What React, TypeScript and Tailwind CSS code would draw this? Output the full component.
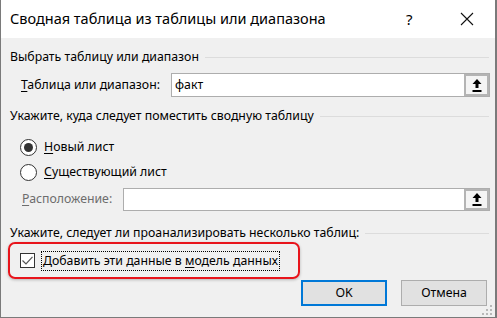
import React from "react";

const font = { fontFamily: '"Noto Sans", "Open Sans", sans-serif' };

const SectionHeader = ({ text }: { text: string }) => (
  <div className="flex items-center h-[16px]">
    <span className="whitespace-nowrap">{text}</span>
    <div className="flex-1 h-px bg-[#dcdcdc] ml-[6px] mr-[6px]" />
  </div>
);

const RefButton = () => (
  <div className="w-[25px] h-full border-2 border-[#b4b4b4] bg-[#f4f4f4] flex items-center justify-center">
    <svg width="10" height="13" viewBox="0 0 10 13">
      <path d="M5 0 L9.5 5 L6.5 5 L6.5 9 L3.5 9 L3.5 5 L0.5 5 Z" fill="#000" />
      <rect x="0.5" y="11" width="9" height="2" fill="#000" />
    </svg>
  </div>
);

export default function App() {
  return (
    <div
      style={font}
      className="w-[497px] h-[318px] flex flex-col border-l border-r-2 border-b border-[#7a7a7a] text-[12.3px] text-black bg-[#f0f0f0] overflow-hidden"
    >
      <div className="h-[38px] shrink-0 bg-white flex items-center pl-[9px]">
        <span className="text-[14.5px] flex-1">Сводная таблица из таблицы или диапазона</span>
        <span className="text-[15px] w-[14px] mr-[40px]">?</span>
        <svg width="14" height="14" viewBox="0 0 14 14" className="mr-[21px]">
          <path d="M1 1 L13 13 M13 1 L1 13" stroke="#111" strokeWidth="1.1" />
        </svg>
      </div>

      <div className="flex flex-col pl-[9px]">
        <div className="mt-[11px]">
          <SectionHeader text="Выбрать таблицу или диапазон" />
        </div>
        <div className="mt-[8px] flex items-center h-[24px]">
          <span className="pl-[11px] w-[161px]">
            <span className="underline underline-offset-2">Т</span>аблица или диапазон:
          </span>
          <div className="w-[319px] h-full border border-[#adadad] bg-white flex items-stretch">
            <span className="flex-1 pl-[3px] flex items-center">факт</span>
            <RefButton />
          </div>
        </div>

        <div className="mt-[11px]">
          <SectionHeader text="Укажите, куда следует поместить сводную таблицу" />
        </div>
        <div className="mt-[14px] h-[18px] flex items-center pl-[10px]">
          <div className="w-[17px] h-[17px] rounded-full border border-[#333] bg-white flex items-center justify-center">
            <div className="w-[9px] h-[9px] rounded-full bg-[#333]" />
          </div>
          <span className="ml-[7px]">
            <span className="underline underline-offset-2">Н</span>овый лист
          </span>
        </div>
        <div className="mt-[7px] h-[18px] flex items-center pl-[10px]">
          <div className="w-[17px] h-[17px] rounded-full border border-[#333] bg-white" />
          <span className="ml-[7px]">
            <span className="underline underline-offset-2">С</span>уществующий лист
          </span>
        </div>
        <div className="mt-[7px] flex items-center h-[23px]">
          <span className="pl-[12px] w-[113px] text-[#6d6d6d]">
            <span className="underline underline-offset-2">Р</span>асположение:
          </span>
          <div className="w-[367px] h-full border border-[#adadad] bg-white flex items-stretch justify-end">
            <RefButton />
          </div>
        </div>

        <div className="mt-[14px]">
          <SectionHeader text="Укажите, следует ли проанализировать несколько таблиц:" />
        </div>
        <div className="mt-[1px] flex">
          <div className="ml-[-2px] w-[292px] h-[37px] border-2 border-[#e8141b] rounded-[7px] shadow-[0_1px_3px_rgba(0,0,0,0.25)] flex items-center pl-[10px]">
            <div className="w-[15px] h-[15px] border border-[#333] bg-white flex items-center justify-center">
              <svg width="11" height="9" viewBox="0 0 11 9">
                <path d="M0.5 4.5 L4 8 L10.5 0.8" stroke="#555" strokeWidth="1.2" fill="none" />
              </svg>
            </div>
            <span className="ml-[6px] border border-dotted border-black px-[1px] leading-[18px]">
              Добавить эти данные в <span className="underline underline-offset-2">м</span>одель данных
            </span>
          </div>
        </div>

        <div className="mt-[1px] flex justify-end pr-[8px] gap-[14px] relative">
          <button className="w-[86px] h-[26px] border-2 border-[#0078d7] bg-[#e1e1e1] text-[12.3px]">OK</button>
          <button className="w-[86px] h-[26px] border border-[#adadad] bg-[#e1e1e1] text-[12.3px]">Отмена</button>
        </div>
      </div>
      <div className="flex justify-end pr-[2px] mt-[-1px]">
        <svg width="11" height="11" viewBox="0 0 11 11">
          <rect x="8" y="0" width="2" height="2" fill="#b8b8b8" />
          <rect x="4" y="4" width="2" height="2" fill="#b8b8b8" />
          <rect x="8" y="4" width="2" height="2" fill="#b8b8b8" />
          <rect x="0" y="8" width="2" height="2" fill="#b8b8b8" />
          <rect x="4" y="8" width="2" height="2" fill="#b8b8b8" />
          <rect x="8" y="8" width="2" height="2" fill="#b8b8b8" />
        </svg>
      </div>
    </div>
  );
}
